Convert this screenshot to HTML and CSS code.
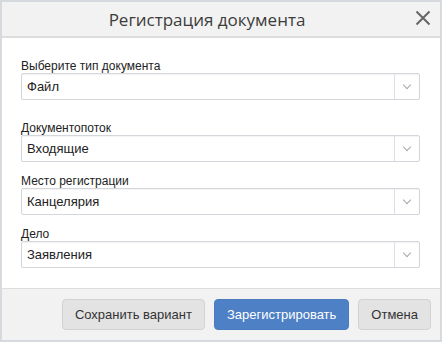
FILE: index.html
```html
<!DOCTYPE html>
<html lang="ru">
<head>
    <meta charset="UTF-8">
    <title>Регистрация документа</title>
    <link rel="stylesheet" href="styles.css">
</head>
<body>
    <div class="dialog">
        <header class="dialog-header">
            <h1 class="dialog-title">Регистрация документа</h1>
            <button class="close-btn" title="Закрыть">
                <svg width="16" height="16" viewBox="0 0 16 16">
                    <path d="M1.5 1.5 L14.5 14.5 M14.5 1.5 L1.5 14.5" stroke="#666" stroke-width="2" fill="none"/>
                </svg>
            </button>
        </header>

        <div class="dialog-body">
            <div class="field field-first">
                <label class="field-label">Выберите тип документа</label>
                <div class="select">
                    <span class="select-value">Файл</span>
                    <span class="select-arrow"></span>
                </div>
            </div>

            <div class="field">
                <label class="field-label">Документопоток</label>
                <div class="select">
                    <span class="select-value">Входящие</span>
                    <span class="select-arrow"></span>
                </div>
            </div>

            <div class="field">
                <label class="field-label">Место регистрации</label>
                <div class="select">
                    <span class="select-value">Канцелярия</span>
                    <span class="select-arrow"></span>
                </div>
            </div>

            <div class="field">
                <label class="field-label">Дело</label>
                <div class="select">
                    <span class="select-value">Заявления</span>
                    <span class="select-arrow"></span>
                </div>
            </div>
        </div>

        <footer class="dialog-footer">
            <button class="btn">Сохранить вариант</button>
            <button class="btn btn-primary">Зарегистрировать</button>
            <button class="btn">Отмена</button>
        </footer>
    </div>
</body>
</html>
```

FILE: styles.css
```css
body {
    margin: 0;
    font-family: 'Liberation Sans', Arial, sans-serif;
    color: #222;
    background: #fff;
}

.dialog {
    box-sizing: border-box;
    width: 442px;
    height: 342px;
    border: 2px solid #d6d9dd;
    display: flex;
    flex-direction: column;
    background: #fff;
}

/* Header */
.dialog-header {
    height: 34px;
    display: flex;
    align-items: center;
    background: #f2f2f2;
    border-bottom: 2px solid #dddddd;
}

.dialog-title {
    flex: 1;
    margin: 0;
    font-family: 'Open Sans', sans-serif;
    font-size: 17px;
    font-weight: 400;
    color: #3c3c3c;
    text-align: center;
}

.close-btn {
    width: 28px;
    height: 34px;
    padding: 0 0 2px 3px;
    border: none;
    background: none;
    cursor: pointer;
    display: flex;
    align-items: center;
}

/* Body */
.dialog-body {
    flex: 1;
    padding: 21px 20px 20px 19px;
    display: flex;
    flex-direction: column;
    gap: 12px;
}

.field-first {
    margin-bottom: 9px;
}

.field-label {
    display: block;
    font-size: 12px;
    line-height: 14px;
    color: #222;
}

.select {
    box-sizing: border-box;
    height: 27px;
    display: flex;
    align-items: center;
    border: 1px solid #d3d6db;
    border-radius: 2px;
    box-shadow: inset 0 1px 1px rgba(0, 0, 0, 0.05);
    background: #fff;
}

.select-value {
    flex: 1;
    padding-left: 5px;
    font-size: 13px;
    color: #222;
}

.select-arrow {
    width: 24px;
    height: 100%;
    border-left: 1px solid #dcdfe3;
    position: relative;
}

.select-arrow::after {
    content: '';
    position: absolute;
    left: 9px;
    top: 8px;
    width: 5px;
    height: 5px;
    border-right: 1.5px solid #a3a7ad;
    border-bottom: 1.5px solid #a3a7ad;
    transform: rotate(45deg);
}

/* Footer */
.dialog-footer {
    border-top: 1px solid #dddddd;
    background: #f2f2f2;
    padding: 10px 9px 0 0;
    height: 41px;
    display: flex;
    justify-content: flex-end;
    gap: 9px;
}

.btn {
    height: 31px;
    padding: 0 12px;
    border: 1px solid #d2d2d2;
    border-radius: 4px;
    background: #e3e3e3;
    font-family: 'Liberation Sans', Arial, sans-serif;
    font-size: 13px;
    color: #333;
    cursor: pointer;
}

.btn-primary {
    background: #4d80c4;
    border-color: #4a7cbf;
    color: #fff;
}
```
